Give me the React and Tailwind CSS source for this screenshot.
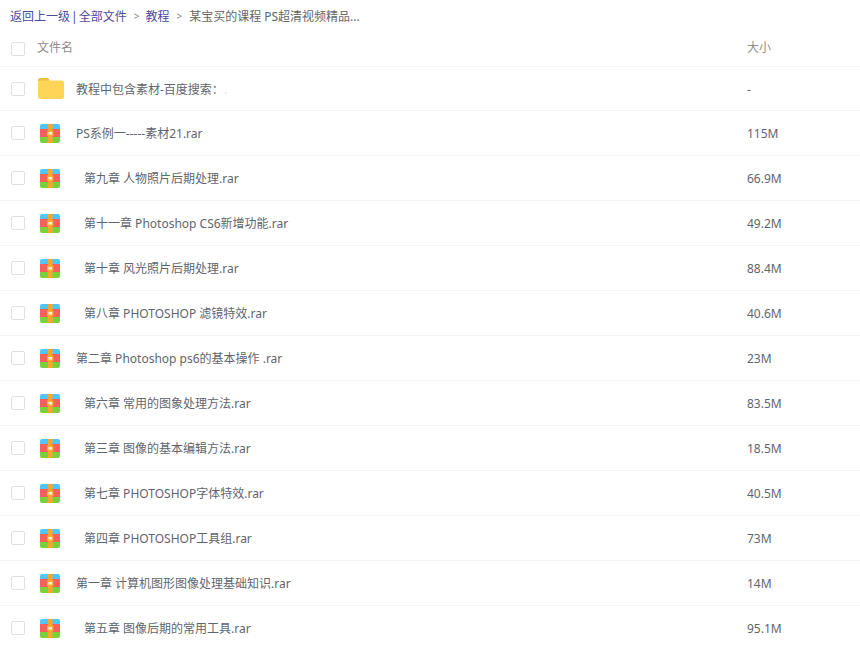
import React from "react";

const files = [
  { name: "PS系例一-----素材21.rar", size: "115M" },
  { name: "第九章 人物照片后期处理.rar", size: "66.9M", indent: true },
  { name: "第十一章 Photoshop CS6新增功能.rar", size: "49.2M", indent: true },
  { name: "第十章 风光照片后期处理.rar", size: "88.4M", indent: true },
  { name: "第八章 PHOTOSHOP 滤镜特效.rar", size: "40.6M", indent: true },
  { name: "第二章 Photoshop ps6的基本操作 .rar", size: "23M" },
  { name: "第六章 常用的图象处理方法.rar", size: "83.5M", indent: true },
  { name: "第三章 图像的基本编辑方法.rar", size: "18.5M", indent: true },
  { name: "第七章 PHOTOSHOP字体特效.rar", size: "40.5M", indent: true },
  { name: "第四章 PHOTOSHOP工具组.rar", size: "73M", indent: true },
  { name: "第一章 计算机图形图像处理基础知识.rar", size: "14M" },
  { name: "第五章 图像后期的常用工具.rar", size: "95.1M", indent: true },
];

const Checkbox = () => (
  <span className="w-[14px] h-[14px] shrink-0 border border-[#e0e0e0] rounded-[2px] bg-white" />
);

const FolderIcon = () => (
  <svg width="26" height="21" viewBox="0 0 26 21">
    <path d="M0 2a2 2 0 0 1 2-2h7a2 2 0 0 1 2 1.2L12 3H0z" fill="#e8bf4f" />
    <path d="M0 5a2 2 0 0 1 2-2.5h22a2 2 0 0 1 2 2V19a2 2 0 0 1-2 2H2a2 2 0 0 1-2-2z" fill="#ffd558" />
  </svg>
);

const RarIcon = () => (
  <svg className="ml-[2px]" width="20" height="19" viewBox="0 0 20 19">
    <path d="M2 0h16a2 2 0 0 1 2 2v3H0V2a2 2 0 0 1 2-2z" fill="#52c5f7" />
    <rect x="0" y="5" width="20" height="8" fill="#f65f5b" />
    <path d="M0 13h20v4a2 2 0 0 1-2 2H2a2 2 0 0 1-2-2z" fill="#7ccf3c" />
    <rect x="8" y="0" width="4.5" height="19" fill="#f9a72b" />
    <rect x="7" y="6.5" width="6.5" height="5.5" fill="#f9a72b" />
    <rect x="8.4" y="7.9" width="3.7" height="2.7" fill="#fdf0cf" />
  </svg>
);

const Row = ({ icon, name, size, indent, first }) => (
  <div className={first ? "flex items-center h-[44px] border-b border-[#f3f4f5]" : "flex items-center h-[45px] border-b border-[#f3f4f5]"}>
    <div className="w-[38px] pl-[11px] flex items-center shrink-0">
      <Checkbox />
    </div>
    <div className="w-[38px] flex shrink-0">{icon}</div>
    <div className={indent ? "flex-1 pl-2 pt-[2px] text-[#5f656e]" : "flex-1 pt-[2px] text-[#5f656e]"}>{name}</div>
    <div className="w-[113px] pt-[2px] shrink-0 text-[#5f656e]">{size}</div>
  </div>
);

export default function App() {
  return (
    <div className="w-[860px] h-[645px] overflow-hidden bg-white text-[12px] font-['Noto_Sans','Noto_Sans_CJK_SC',sans-serif]">
      <div className="h-[33px] pl-[10px] flex items-center text-[#666]">
        <span className="text-[#4b4a9c]">返回上一级</span>
        <span className="text-[#4b4a9c] mx-px">|</span>
        <span className="text-[#4b4a9c]">全部文件</span>
        <span className="ml-[7px] mr-[6px] text-[#888] text-[10px]">&gt;</span>
        <span className="text-[#4b4a9c]">教程</span>
        <span className="ml-[7px] mr-[7px] text-[#888] text-[10px]">&gt;</span>
        <span>某宝买的课程 PS超清视频精品...</span>
      </div>
      <div className="flex items-center h-[34px] border-b border-[#f3f4f5] text-[#8c8c8c]">
        <div className="w-[37px] pl-[11px] mb-[2px] shrink-0 flex items-center">
          <Checkbox />
        </div>
        <div className="flex-1 mb-[4px]">文件名</div>
        <div className="w-[113px] mb-[4px] shrink-0">大小</div>
      </div>
      <Row
        first
        icon={<FolderIcon />}
        name={
          <>
            教程中包含素材-百度搜索：<span className="text-[#ddd]">.</span>
          </>
        }
        size="-"
      />
      {files.map((f) => (
        <Row key={f.name} icon={<RarIcon />} name={f.name} size={f.size} indent={f.indent} />
      ))}
    </div>
  );
}
